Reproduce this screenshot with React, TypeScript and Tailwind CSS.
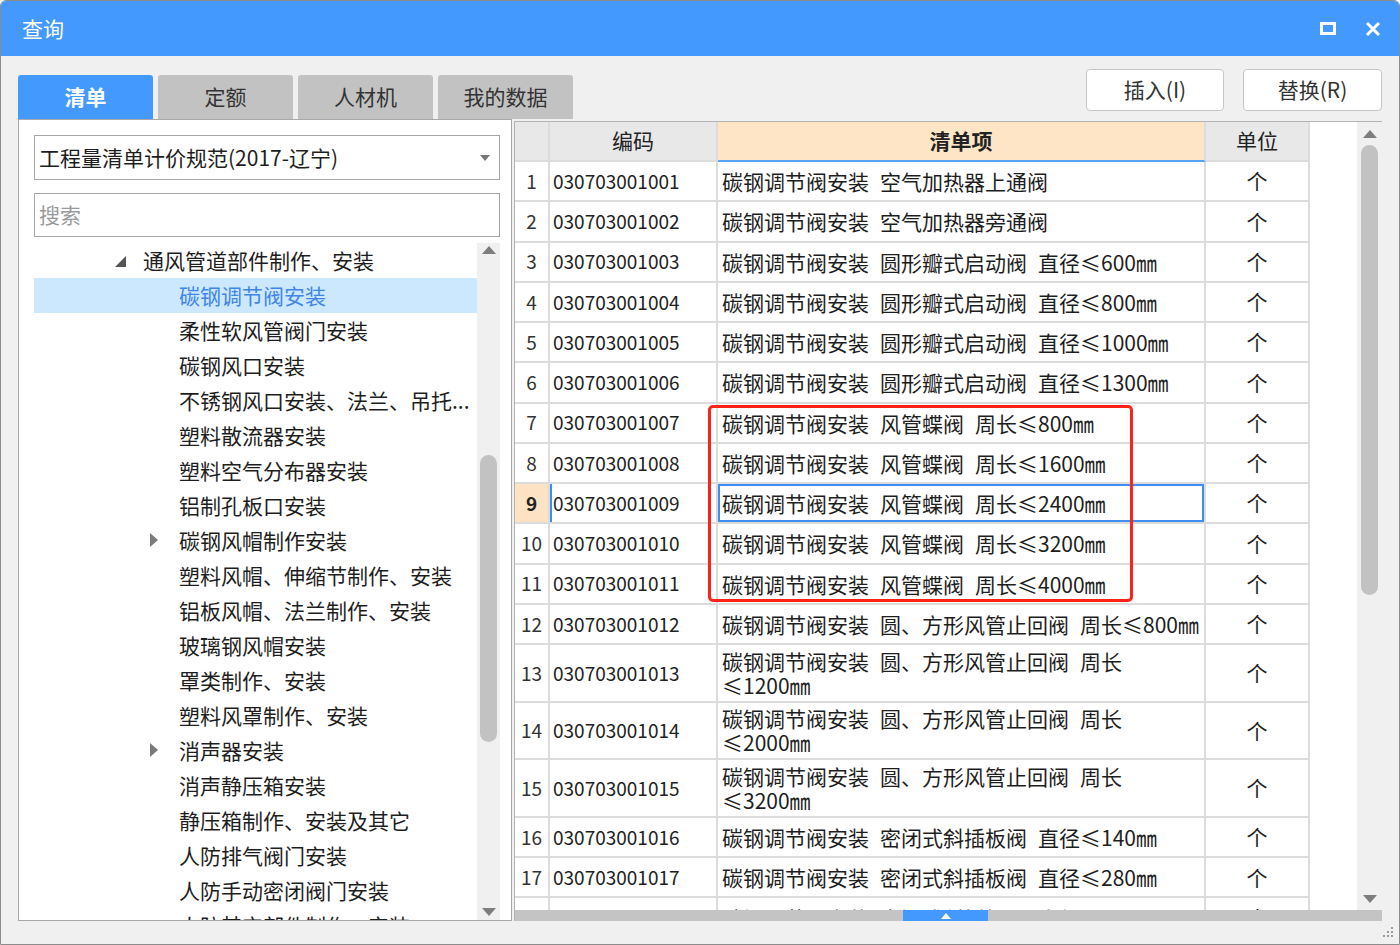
import React from 'react';

type GridRow = { code: string; parts: string[]; wrap?: string };

const rows: GridRow[] = [
  { code: '030703001001', parts: ['碳钢调节阀安装', '空气加热器上通阀'] },
  { code: '030703001002', parts: ['碳钢调节阀安装', '空气加热器旁通阀'] },
  { code: '030703001003', parts: ['碳钢调节阀安装', '圆形瓣式启动阀', '直径≤600㎜'] },
  { code: '030703001004', parts: ['碳钢调节阀安装', '圆形瓣式启动阀', '直径≤800㎜'] },
  { code: '030703001005', parts: ['碳钢调节阀安装', '圆形瓣式启动阀', '直径≤1000㎜'] },
  { code: '030703001006', parts: ['碳钢调节阀安装', '圆形瓣式启动阀', '直径≤1300㎜'] },
  { code: '030703001007', parts: ['碳钢调节阀安装', '风管蝶阀', '周长≤800㎜'] },
  { code: '030703001008', parts: ['碳钢调节阀安装', '风管蝶阀', '周长≤1600㎜'] },
  { code: '030703001009', parts: ['碳钢调节阀安装', '风管蝶阀', '周长≤2400㎜'] },
  { code: '030703001010', parts: ['碳钢调节阀安装', '风管蝶阀', '周长≤3200㎜'] },
  { code: '030703001011', parts: ['碳钢调节阀安装', '风管蝶阀', '周长≤4000㎜'] },
  { code: '030703001012', parts: ['碳钢调节阀安装', '圆、方形风管止回阀', '周长≤800㎜'] },
  { code: '030703001013', parts: ['碳钢调节阀安装', '圆、方形风管止回阀', '周长'], wrap: '≤1200㎜' },
  { code: '030703001014', parts: ['碳钢调节阀安装', '圆、方形风管止回阀', '周长'], wrap: '≤2000㎜' },
  { code: '030703001015', parts: ['碳钢调节阀安装', '圆、方形风管止回阀', '周长'], wrap: '≤3200㎜' },
  { code: '030703001016', parts: ['碳钢调节阀安装', '密闭式斜插板阀', '直径≤140㎜'] },
  { code: '030703001017', parts: ['碳钢调节阀安装', '密闭式斜插板阀', '直径≤280㎜'] },
  { code: '030703001018', parts: ['碳钢调节阀安装', '密闭式斜插板阀', '直径≤340㎜'] },
];

type TreeItem = { label: string; level: 0 | 1; arrow?: 'open' | 'closed'; selected?: boolean };

const tree: TreeItem[] = [
  { label: '通风管道部件制作、安装', level: 0, arrow: 'open' },
  { label: '碳钢调节阀安装', level: 1, selected: true },
  { label: '柔性软风管阀门安装', level: 1 },
  { label: '碳钢风口安装', level: 1 },
  { label: '不锈钢风口安装、法兰、吊托...', level: 1 },
  { label: '塑料散流器安装', level: 1 },
  { label: '塑料空气分布器安装', level: 1 },
  { label: '铝制孔板口安装', level: 1 },
  { label: '碳钢风帽制作安装', level: 1, arrow: 'closed' },
  { label: '塑料风帽、伸缩节制作、安装', level: 1 },
  { label: '铝板风帽、法兰制作、安装', level: 1 },
  { label: '玻璃钢风帽安装', level: 1 },
  { label: '罩类制作、安装', level: 1 },
  { label: '塑料风罩制作、安装', level: 1 },
  { label: '消声器安装', level: 1, arrow: 'closed' },
  { label: '消声静压箱安装', level: 1 },
  { label: '静压箱制作、安装及其它', level: 1 },
  { label: '人防排气阀门安装', level: 1 },
  { label: '人防手动密闭阀门安装', level: 1 },
  { label: '人防其它部件制作、安装', level: 1 },
];

const tabs = ['清单', '定额', '人材机', '我的数据'];

// Text made of segments with a half-width gap between them
const Segments = ({ parts }: { parts: string[] }) => (
  <span className="whitespace-nowrap">
    {parts.map((p, i) => (
      <span key={i} className={i > 0 ? 'ml-[11px]' : ''}>
        {p}
      </span>
    ))}
  </span>
);

const TreeRow = ({ item }: { item: TreeItem }) => (
  <div
    className={`h-[35px] flex items-center whitespace-nowrap relative ${
      item.selected ? 'bg-[#cce8ff] text-[#4185e6]' : 'text-[#1e1e1e]'
    } ${item.level === 0 ? 'pl-[109px]' : 'pl-[145px]'}`}
  >
    {item.arrow === 'open' && (
      <svg className="absolute left-[81px] top-[13px]" width="11" height="11" viewBox="0 0 11 11">
        <polygon points="11,0 11,11 0,11" fill="#555" />
      </svg>
    )}
    {item.arrow === 'closed' && (
      <svg className="absolute left-[116px] top-[10px]" width="8" height="14" viewBox="0 0 8 14">
        <polygon points="0,0 8,7 0,14" fill="#7a7a7a" />
      </svg>
    )}
    {item.label}
  </div>
);

const ScrollArrow = ({ up }: { up?: boolean }) => (
  <svg width="14" height="8" viewBox="0 0 14 8">
    <polygon points={up ? '0,8 7,0 14,8' : '0,0 14,0 7,8'} fill="#7d7d7d" />
  </svg>
);

const LeftPanel = () => (
  <div className="w-[494px] h-full bg-white border border-[#a8a8a8] flex flex-col pl-[15px] pr-[11px] pt-[15px]">
    <div className="h-[45px] border border-[#a6a6a6] flex items-center justify-between pl-[4px] pr-[9px] text-[21px] text-[#1e1e1e]">
      <span>工程量清单计价规范(2017-辽宁)</span>
      <svg width="10" height="6" viewBox="0 0 10 6">
        <polygon points="0,0 10,0 5,6" fill="#777" />
      </svg>
    </div>
    <div className="mt-[13px] h-[44px] border border-[#a6a6a6] flex items-center pl-[4px] text-[21px] text-[#9a9a9a]">
      搜索
    </div>
    <div className="mt-[6px] flex-1 flex min-h-0">
      <div className="w-[443px] overflow-hidden text-[21px]">
        {tree.map((t, i) => (
          <TreeRow key={i} item={t} />
        ))}
      </div>
      <div className="w-[23px] bg-[#f0f0f0] flex flex-col items-center pt-[3px] pb-[4px]">
        <ScrollArrow up />
        <div className="mt-[201px] w-[17px] h-[287px] rounded-full bg-[#c2c2c2]" />
        <div className="flex-1" />
        <ScrollArrow />
      </div>
    </div>
  </div>
);

const cellB = 'border-r-2 border-b-2 border-[#dcdcdc]';

const DataRow = ({ row, n }: { row: GridRow; n: number }) => {
  const cur = n === 9;
  const h = row.wrap ? 'h-[57.67px]' : 'h-[40.25px]';
  return (
    <div className={`flex ${h} shrink-0`}>
      <div
        className={`w-[35px] ${cellB} flex items-center justify-center text-[19px] ${
          cur ? 'bg-[#fde3c3] font-bold text-[#222]' : 'text-[#333]'
        }`}
      >
        {n}
      </div>
      <div
        className={`w-[168px] ${cellB} flex items-center pl-[3px] text-[19px] text-[#222] ${
          cur ? 'shadow-[inset_2px_0_0_#3d8ef0]' : ''
        }`}
      >
        {row.code}
      </div>
      <div
        className={`w-[488px] ${cellB} flex flex-col justify-center pl-[4px] text-[21px] leading-[24px] text-[#1e1e1e] ${
          cur ? 'shadow-[inset_0_0_0_2px_#3d8ef0]' : ''
        }`}
      >
        <Segments parts={row.parts} />
        {row.wrap && <span>{row.wrap}</span>}
      </div>
      <div className={`w-[104px] ${cellB} flex items-center justify-center text-[21px] text-[#1e1e1e]`}>个</div>
    </div>
  );
};

const Grid = () => (
  <div className="relative w-[868px] h-[800px] mt-[2px] border-l border-t border-[#b3b3b3] bg-white flex flex-col">
    <div className="flex-1 flex min-h-0">
      <div className="w-[842px] overflow-hidden flex flex-col">
        <div className="flex h-[40px] shrink-0 text-[21px] text-[#222]">
          <div className={`w-[35px] bg-[#e8e8e8] ${cellB}`} />
          <div className={`w-[168px] bg-[#e8e8e8] ${cellB} flex items-center justify-center`}>编码</div>
          <div className="w-[488px] bg-[#fee5c6] border-r-2 border-r-[#dcdcdc] border-b-2 border-b-[#5aa2f2] flex items-center justify-center font-bold">
            清单项
          </div>
          <div className={`w-[104px] bg-[#e8e8e8] ${cellB} flex items-center justify-center`}>单位</div>
        </div>
        {rows.map((r, i) => (
          <DataRow key={r.code} row={r} n={i + 1} />
        ))}
      </div>
      <div className="w-[25px] bg-[#f0f0f0] flex flex-col items-center pt-[8px] pb-[7px]">
        <ScrollArrow up />
        <div className="mt-[7px] w-[17px] h-[450px] rounded-full bg-[#c2c2c2]" />
        <div className="flex-1" />
        <ScrollArrow />
      </div>
    </div>
    <div className="h-[11px] bg-[#c4c4c4] flex">
      <div className="ml-[388px] w-[85px] h-full bg-[#4499ff] flex items-center justify-center">
        <svg width="10" height="6" viewBox="0 0 10 6">
          <polygon points="0,6 5,0 10,6" fill="#fff" />
        </svg>
      </div>
    </div>
    {/* red annotation frame */}
    <div className="absolute left-[193px] top-[283px] w-[425px] h-[197px] border-[3px] border-[#ff2216] rounded-[5px]" />
  </div>
);

export default function App() {
  return (
    <div className="w-[1400px] h-[945px] overflow-hidden bg-[#f0f0f0] border border-[#8c8c8c] rounded-t-[6px] flex flex-col font-['Noto_Sans_CJK_SC','Noto_Sans',sans-serif]">
      <div className="h-[55px] shrink-0 bg-[#4499ff] flex items-center justify-between pl-[21px] pr-[18px] text-white">
        <span className="text-[21px]">查询</span>
        <div className="flex items-center gap-[29px]">
          <div className="w-[16px] h-[13px] border-[3px] border-white" />
          <svg width="16" height="16" viewBox="0 0 16 16">
            <path d="M2 2L14 14M14 2L2 14" stroke="#fff" strokeWidth="3" />
          </svg>
        </div>
      </div>
      <div className="flex-1 flex flex-col px-[17px]">
        <div className="h-[63px] flex items-end justify-between">
          <div className="flex gap-[5px]">
            {tabs.map((t, i) => (
              <div
                key={t}
                className={`w-[135px] h-[44px] rounded-t-[3px] flex items-center justify-center text-[21px] ${
                  i === 0 ? 'bg-[#4499ff] text-white font-bold' : 'bg-[#c2c2c2] text-[#333]'
                }`}
              >
                {t}
              </div>
            ))}
          </div>
          <div className="self-start mt-[13px] flex gap-[19px] text-[21px] text-[#333]">
            <div className="w-[138px] h-[42px] bg-white border border-[#c6c6c6] rounded-[4px] flex items-center justify-center">
              插入(I)
            </div>
            <div className="w-[139px] h-[42px] bg-white border border-[#c6c6c6] rounded-[4px] flex items-center justify-center">
              替换(R)
            </div>
          </div>
        </div>
        <div className="h-[802px] flex gap-[2px]">
          <LeftPanel />
          <Grid />
        </div>
        <div className="flex-1 flex justify-end items-end pb-[5px] -mr-[12px]">
          <svg width="14" height="14" viewBox="0 0 14 14">
            {[
              [11, 2],
              [7, 6],
              [11, 6],
              [3, 10],
              [7, 10],
              [11, 10],
            ].map(([x, y], i) => (
              <rect key={i} x={x} y={y} width="2" height="2" fill="#9a9a9a" />
            ))}
          </svg>
        </div>
      </div>
    </div>
  );
}
